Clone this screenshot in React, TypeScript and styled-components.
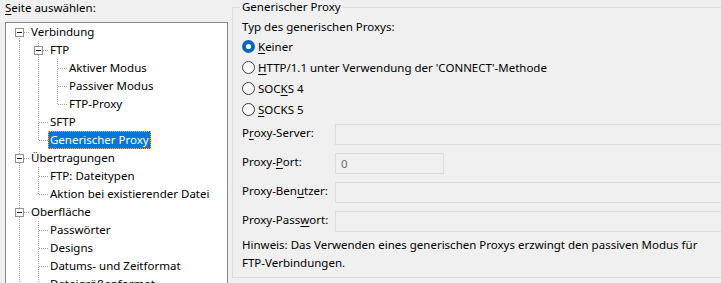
import React from "react";
import styled, { createGlobalStyle } from "styled-components";

const GlobalStyle = createGlobalStyle`
  html, body {
    margin: 0;
    padding: 0;
    background: #f0f0f0;
    overflow: hidden;
  }
  body {
    font-family: "Noto Sans", "Liberation Sans", sans-serif;
    font-size: 11.5px;
    color: #000;
  }
`;

type TreeNode = { label: string; children?: TreeNode[]; selected?: boolean };

type FlatRow = {
  node: TreeNode;
  guides: boolean[];
  up: boolean;
  down: boolean;
};

const pages: TreeNode[] = [
  {
    label: "Verbindung",
    children: [
      {
        label: "FTP",
        children: [
          { label: "Aktiver Modus" },
          { label: "Passiver Modus" },
          { label: "FTP-Proxy" },
        ],
      },
      { label: "SFTP" },
      { label: "Generischer Proxy", selected: true },
    ],
  },
  {
    label: "Übertragungen",
    children: [{ label: "FTP: Dateitypen" }, { label: "Aktion bei existierender Datei" }],
  },
  {
    label: "Oberfläche",
    children: [
      { label: "Passwörter" },
      { label: "Designs" },
      { label: "Datums- und Zeitformat" },
      { label: "Dateigrößenformat" },
      { label: "Dateilisten" },
    ],
  },
  { label: "Sprache" },
  { label: "Dateien bearbeiten" },
  { label: "Updates" },
];

function flatten(nodes: TreeNode[], guides: boolean[], out: FlatRow[]) {
  nodes.forEach((node, i) => {
    const last = i === nodes.length - 1;
    const firstRoot = guides.length === 0 && i === 0;
    out.push({ node, guides, up: !firstRoot, down: !last });
    if (node.children) flatten(node.children, [...guides, !last], out);
  });
  return out;
}

const rows = flatten(pages, [], []);

const radios = [
  { pre: "", key: "K", post: "einer", checked: true },
  { pre: "", key: "H", post: "TTP/1.1 unter Verwendung der 'CONNECT'-Methode" },
  { pre: "SOC", key: "K", post: "S 4" },
  { pre: "", key: "S", post: "OCKS 5" },
];

const fields = [
  { pre: "P", key: "r", post: "oxy-Server:", value: "", narrow: false },
  { pre: "Proxy-", key: "P", post: "ort:", value: "0", narrow: true },
  { pre: "Proxy-Ben", key: "u", post: "tzer:", value: "", narrow: false },
  { pre: "Proxy-Pass", key: "w", post: "ort:", value: "", narrow: false },
];

export default function App() {
  return (
    <>
      <GlobalStyle />
      <Page>
        <Sidebar>
          <Caption>
            <u>S</u>eite auswählen:
          </Caption>
          <TreeBox>
            {rows.map((r, i) => (
              <TreeRow key={i}>
                {r.guides.map((g, j) => (
                  <Guide key={j} $line={g} />
                ))}
                <Elbow $up={r.up} $down={r.down}>
                  {r.node.children && (
                    <Expander>
                      <svg width="9" height="9" viewBox="0 0 9 9">
                        <rect x="0.5" y="0.5" width="8" height="8" fill="#fff" stroke="#919191" />
                        <path d="M2 4.5h5" stroke="#1e1e1e" />
                      </svg>
                    </Expander>
                  )}
                </Elbow>
                <ItemLabel $selected={!!r.node.selected}>{r.node.label}</ItemLabel>
              </TreeRow>
            ))}
          </TreeBox>
        </Sidebar>

        <Group>
          <Legend>Generischer Proxy</Legend>
          <Heading>Typ des generischen Proxys:</Heading>
          <RadioList>
            {radios.map((r, i) => (
              <RadioRow key={i}>
                <svg width="13" height="13" viewBox="0 0 13 13">
                  {r.checked ? (
                    <>
                      <circle cx="6.5" cy="6.5" r="6.5" fill="#0067c0" />
                      <circle cx="6.5" cy="6.5" r="2.6" fill="#fff" />
                    </>
                  ) : (
                    <circle cx="6.5" cy="6.5" r="6" fill="#fff" stroke="#3c3c3c" />
                  )}
                </svg>
                <span>
                  {r.pre}
                  <u>{r.key}</u>
                  {r.post}
                </span>
              </RadioRow>
            ))}
          </RadioList>
          <Form>
            {fields.map((f, i) => (
              <React.Fragment key={i}>
                <FieldLabel>
                  {f.pre}
                  <u>{f.key}</u>
                  {f.post}
                </FieldLabel>
                <TextBox $narrow={f.narrow}>{f.value}</TextBox>
              </React.Fragment>
            ))}
          </Form>
          <Hint>
            Hinweis: Das Verwenden eines generischen Proxys erzwingt den passiven Modus für
            <br />
            FTP-Verbindungen.
          </Hint>
        </Group>
      </Page>
    </>
  );
}

const Page = styled.div`
  display: flex;
  align-items: flex-start;
  gap: 4px;
  width: 721px;
  height: 283px;
  overflow: hidden;

  u {
    text-decoration: underline;
    text-underline-offset: 2px;
  }
`;

const Sidebar = styled.div`
  flex: none;
  width: 223px;
  padding-left: 5px;
  display: flex;
  flex-direction: column;
`;

const Caption = styled.div`
  line-height: 16px;
  margin-bottom: 6px;
`;

const TreeBox = styled.div`
  height: 320px;
  background: #fff;
  border: 1px solid #828790;
`;

const TreeRow = styled.div`
  display: flex;
  align-items: stretch;
  height: 18px;
`;

const dotsV = `linear-gradient(#a0a0a0 50%, transparent 50%) 0 0 / 1px 2px`;
const dotsH = `linear-gradient(to right, #a0a0a0 50%, transparent 50%) 0 0 / 2px 1px`;

const Guide = styled.span<{ $line: boolean }>`
  flex: none;
  width: 19px;
  position: relative;

  &::before {
    content: "";
    display: ${(p) => (p.$line ? "block" : "none")};
    position: absolute;
    left: 13px;
    top: 0;
    bottom: 0;
    width: 1px;
    background: ${dotsV};
  }
`;

const Elbow = styled.span<{ $up: boolean; $down: boolean }>`
  flex: none;
  width: 23px;
  position: relative;

  &::before {
    content: "";
    position: absolute;
    left: 13px;
    top: ${(p) => (p.$up ? "0" : "9px")};
    bottom: ${(p) => (p.$down ? "0" : "9px")};
    width: 1px;
    background: ${dotsV};
  }

  &::after {
    content: "";
    position: absolute;
    left: 14px;
    top: 9px;
    width: 9px;
    height: 1px;
    background: ${dotsH};
  }
`;

const Expander = styled.span`
  position: absolute;
  left: 9px;
  top: 5px;
  width: 9px;
  height: 9px;
  z-index: 1;

  svg {
    display: block;
  }
`;

const ItemLabel = styled.span<{ $selected: boolean }>`
  box-sizing: border-box;
  height: 18px;
  line-height: 16px;
  padding: 0 1px;
  white-space: nowrap;
  border: 1px ${(p) => (p.$selected ? "dotted #f2b544" : "solid transparent")};
  background: ${(p) => (p.$selected ? "#0078d7" : "transparent")};
  color: ${(p) => (p.$selected ? "#fff" : "#000")};
`;

const Group = styled.fieldset`
  flex: none;
  box-sizing: border-box;
  width: 520px;
  height: 278px;
  margin: 0;
  padding: 0 0 0 9px;
  min-width: 0;
  border: 1px solid #dcdcdc;
  display: flex;
  flex-direction: column;
`;

const Legend = styled.legend`
  margin-left: -2px;
  padding: 0 2px;
  line-height: 14px;
`;

const Heading = styled.div`
  line-height: 16px;
  margin-top: 5px;
`;

const RadioList = styled.div`
  display: flex;
  flex-direction: column;
  margin-top: 1px;
`;

const RadioRow = styled.div`
  display: flex;
  align-items: center;
  gap: 3px;
  height: 21px;
  white-space: nowrap;

  svg {
    flex: none;
  }
`;

const Form = styled.div`
  display: grid;
  grid-template-columns: 93px 1fr;
  row-gap: 8px;
  margin-top: 4px;
  padding-right: 9px;
`;

const FieldLabel = styled.div`
  height: 21px;
  line-height: 16px;
  white-space: nowrap;
  display: flex;
  align-items: center;
  padding-bottom: 3px;
  box-sizing: border-box;
`;

const TextBox = styled.div<{ $narrow: boolean }>`
  box-sizing: border-box;
  height: 21px;
  width: ${(p) => (p.$narrow ? "109px" : "auto")};
  border: 1px solid #dcdcdc;
  background: #f0f0f0;
  color: #6d6d6d;
  padding-left: 5px;
  line-height: 19px;
`;

const Hint = styled.div`
  margin-top: 4px;
  line-height: 18px;
  white-space: nowrap;
`;
